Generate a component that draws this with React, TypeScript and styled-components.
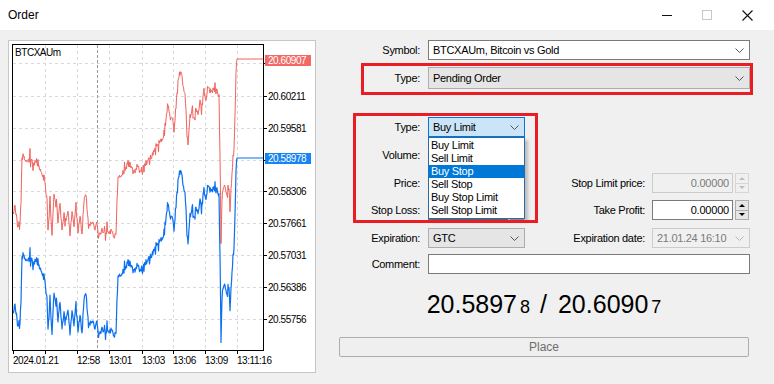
import React from 'react';
import styled, { createGlobalStyle, css } from 'styled-components';

const GlobalStyle = createGlobalStyle`
  html, body { margin: 0; padding: 0; background: #f0f0f0; }
  body { font-family: "Liberation Sans", Arial, sans-serif; font-size: 11px; color: #000; }
  * { box-sizing: border-box; }
`;

const Window = styled.div`
  width: 774px;
  height: 384px;
  background: #f0f0f0;
  overflow: hidden;
  display: flex;
  flex-direction: column;
`;

const TitleBar = styled.div`
  height: 30px;
  flex-shrink: 0;
  background: #fff;
  display: flex;
  align-items: center;
  padding-left: 8px;
  font-size: 12px;
`;

const Controls = styled.div`
  margin-left: auto;
  height: 100%;
  display: flex;
  padding-right: 7px;
`;

const CtrlButton = styled.div<{ $disabled?: boolean }>`
  width: 40px;
  height: 100%;
  display: flex;
  align-items: center;
  justify-content: center;
  color: ${(p) => (p.$disabled ? '#c8c8c8' : '#111')};
`;

const Body = styled.div`
  display: flex;
  padding: 10px 0 0 8px;
`;

const ChartPanel = styled.div`
  width: 308px;
  height: 333px;
  flex-shrink: 0;
  background: #fff;
  border: 1px solid #c6c6c6;
  svg { display: block; }
`;

const Form = styled.div`
  position: relative;
  margin-left: 14px;
  width: 444px;
`;

const Row = styled.div<{ $mt?: number; $h?: number }>`
  display: flex;
  align-items: center;
  height: ${(p) => p.$h ?? 20}px;
  margin-top: ${(p) => p.$mt ?? 0}px;
`;

const Label = styled.div<{ $w?: number; $pr?: number }>`
  width: ${(p) => p.$w ?? 98}px;
  flex-shrink: 0;
  padding-right: ${(p) => p.$pr ?? 8}px;
  text-align: right;
  white-space: nowrap;
  letter-spacing: -0.3px;
`;

type Tone = 'white' | 'gray' | 'focus' | 'disabled';

const tones: Record<Tone, ReturnType<typeof css>> = {
  white: css`background: #fff; border-color: #7a7a7a; color: #000;`,
  gray: css`background: #e5e5e5; border-color: #adadad; color: #000;`,
  focus: css`background: #cce4f7; border-color: #0078d7; color: #000;`,
  disabled: css`background: #f0f0f0; border-color: #cccccc; color: #7a7a7a;`,
};

const SelectBox = styled.div<{ $tone: Tone; $w: number; $h?: number }>`
  width: ${(p) => p.$w}px;
  height: ${(p) => p.$h ?? 20}px;
  flex-shrink: 0;
  display: flex;
  align-items: center;
  padding-left: 4px;
  border: 1px solid;
  letter-spacing: -0.3px;
  white-space: nowrap;
  ${(p) => tones[p.$tone]}
`;

const Chevron = styled.svg<{ $light?: boolean }>`
  margin-left: auto;
  margin-right: 5px;
  flex-shrink: 0;
  stroke: ${(p) => (p.$light ? '#b8b8b8' : '#555')};
`;

const Input = styled.div<{ $w: number; $disabled?: boolean; $left?: boolean }>`
  width: ${(p) => p.$w}px;
  height: 20px;
  flex-shrink: 0;
  display: flex;
  align-items: center;
  justify-content: ${(p) => (p.$left ? 'flex-start' : 'flex-end')};
  padding: 0 3px;
  border: 1px solid ${(p) => (p.$disabled ? '#cccccc' : '#7a7a7a')};
  background: ${(p) => (p.$disabled ? '#f0f0f0' : '#fff')};
  color: ${(p) => (p.$disabled ? '#7a7a7a' : '#000')};
  letter-spacing: -0.2px;
`;

const Spinner = styled.div<{ $disabled?: boolean }>`
  width: 14px;
  height: 20px;
  margin-left: 2px;
  flex-shrink: 0;
  display: flex;
  flex-direction: column;
  border: 1px solid ${(p) => (p.$disabled ? '#d6d6d6' : '#adadad')};
  background: ${(p) => (p.$disabled ? '#f0f0f0' : '#e5e5e5')};
`;

const SpinHalf = styled.div<{ $down?: boolean; $disabled?: boolean }>`
  flex: 1;
  display: flex;
  align-items: center;
  justify-content: center;
  ${(p) => !p.$down && css`border-bottom: 1px solid ${p.$disabled ? '#d6d6d6' : '#adadad'};`}
  &::after {
    content: '';
    border-left: 3px solid transparent;
    border-right: 3px solid transparent;
    ${(p) =>
      p.$down
        ? css`border-top: 3px solid ${p.$disabled ? '#bdbdbd' : '#000'};`
        : css`border-bottom: 3px solid ${p.$disabled ? '#bdbdbd' : '#000'};`}
  }
`;

const DropAnchor = styled.div`
  position: relative;
  z-index: 3;
`;

const DropList = styled.div`
  position: absolute;
  top: 100%;
  left: 0;
  width: 100%;
  padding: 1px 0;
  background: #fff;
  border: 1px solid #2b6aa6;
  box-shadow: 3px 3px 3px rgba(0, 0, 0, 0.22);
`;

const DropItem = styled.div<{ $active?: boolean }>`
  height: 13px;
  line-height: 13px;
  padding-left: 2px;
  letter-spacing: -0.3px;
  white-space: nowrap;
  background: ${(p) => (p.$active ? '#0078d7' : 'transparent')};
  color: ${(p) => (p.$active ? '#fff' : '#000')};
`;

const Highlight = styled.div<{ $x: number; $y: number; $w: number; $h: number }>`
  position: absolute;
  left: ${(p) => p.$x}px;
  top: ${(p) => p.$y}px;
  width: ${(p) => p.$w}px;
  height: ${(p) => p.$h}px;
  border: 3px solid #ec1c24;
  pointer-events: none;
  z-index: 4;
`;

const Quote = styled.div`
  margin: 16px 0 0 9px;
  width: 410px;
  height: 30px;
  line-height: 30px;
  font-size: 25px;
  text-align: center;
  white-space: nowrap;
  color: #000;
`;

const QuoteSmall = styled.span`
  font-size: 18px;
  margin-left: 3px;
`;

const QuoteSep = styled.span`
  margin: 0 11px 0 10px;
`;

const PlaceButton = styled.div`
  margin: 18px 0 0 9px;
  width: 410px;
  height: 20px;
  display: flex;
  align-items: center;
  justify-content: center;
  border: 1px solid #adadad;
  border-radius: 2px;
  background: #efefef;
  color: #6d6d6d;
  font-size: 12px;
`;

const ChevronIcon = ({ light }: { light?: boolean }) => (
  <Chevron $light={light} width="9" height="5" viewBox="0 0 9 5" fill="none" strokeWidth="1">
    <path d="M0.5 0.5 L4.5 4.5 L8.5 0.5" />
  </Chevron>
);

const Select = ({ tone, w, h, children }: { tone: Tone; w: number; h?: number; children: React.ReactNode }) => (
  <SelectBox $tone={tone} $w={w} $h={h}>
    <span>{children}</span>
    <ChevronIcon light={tone === 'disabled'} />
  </SelectBox>
);

const SpinButtons = ({ disabled }: { disabled?: boolean }) => (
  <Spinner $disabled={disabled}>
    <SpinHalf $disabled={disabled} />
    <SpinHalf $down $disabled={disabled} />
  </Spinner>
);

// ---- chart data (page coordinates, bid line; ask = bid - spread) ----
const BLUE_KEYS: [number, number][] = [
  [13, 310], [16, 312], [18, 328], [20, 316], [21, 300], [22, 256], [25, 258], [28, 262], [30, 255],
  [33, 263], [36, 260], [40, 268], [43, 275], [45, 283], [47, 300], [48, 330], [50, 300], [52, 333],
  [54, 290], [56, 305], [58, 320], [60, 300], [62, 330], [64, 310], [66, 322], [68, 310], [70, 333],
  [72, 312], [74, 325], [76, 305], [78, 330], [80, 315], [82, 333], [84, 300], [86, 295], [88, 318],
  [90, 325], [92, 320], [95, 330], [97, 322], [99, 334], [102, 330], [106, 331], [110, 330], [114, 334],
  [116, 335], [117, 300], [118, 278], [121, 273], [125, 270], [128, 262], [131, 265], [134, 272],
  [137, 266], [140, 270], [143, 268], [146, 262], [149, 258], [152, 255], [155, 247], [158, 243],
  [161, 238], [163, 240], [164, 228], [166, 222], [168, 198], [170, 218], [172, 215], [174, 232],
  [176, 206], [178, 180], [180, 172], [181, 168], [183, 185], [185, 190], [187, 230], [188, 243],
  [190, 215], [192, 210], [194, 220], [196, 207], [198, 212], [200, 200], [202, 205], [204, 190],
  [206, 198], [208, 188], [211, 190], [214, 188], [217, 191], [219, 200], [220, 255], [221, 335],
  [222, 300], [223, 290], [225, 285], [227, 297], [229, 283], [230, 310], [232, 270], [234, 250],
  [235, 215], [236, 170], [237, 158],
];

function buildSeries(): [number, number][] {
  let seed = 90211;
  const rnd = () => {
    seed = (seed * 16807) % 2147483647;
    return seed / 2147483647;
  };
  const pts: [number, number][] = [];
  for (let i = 0; i < BLUE_KEYS.length - 1; i++) {
    const [x0, y0] = BLUE_KEYS[i];
    const [x1, y1] = BLUE_KEYS[i + 1];
    const steps = Math.max(1, Math.round((x1 - x0) / 0.5));
    for (let k = 0; k < steps; k++) {
      const t = k / steps;
      let jitter = (rnd() - 0.5) * 6;
      if (rnd() < 0.15) jitter += (rnd() - 0.5) * 18;
      pts.push([x0 + (x1 - x0) * t, y0 + (y1 - y0) * t + jitter]);
    }
  }
  pts.push([237, 158], [263, 158]);
  return pts;
}

const BID = buildSeries();
const ASK = BID.map(([x, y]) => [x, y - 99] as [number, number]);
const toPath = (pts: [number, number][]) =>
  pts.map(([x, y], i) => `${i ? 'L' : 'M'}${x.toFixed(1)} ${y.toFixed(1)}`).join(' ');

const H_GRID = [63, 96, 128, 160, 191, 223, 255, 287, 319];
const V_GRID = [45, 77, 109, 142, 173, 205, 237];
const PRICES: [string, number][] = [
  ['20.60211', 96], ['20.59581', 128], ['20.58306', 191], ['20.57661', 223],
  ['20.57031', 255], ['20.56386', 287], ['20.55756', 319],
];
const TIMES: [string, number][] = [
  ['2024.01.21', 13], ['12:58', 77], ['13:01', 109], ['13:03', 142], ['13:06', 173], ['13:09', 205], ['13:11:16', 237],
];

const Chart = () => (
  <svg width="306" height="331" viewBox="9 41 306 331">
    <g shapeRendering="crispEdges">
      {H_GRID.map((y) => (
        <line key={'h' + y} x1="13" x2="263" y1={y + 0.5} y2={y + 0.5} stroke="#d9d9d9" strokeDasharray="3 3" />
      ))}
      {V_GRID.map((x) => (
        <line key={'v' + x} x1={x + 0.5} x2={x + 0.5} y1="45" y2="350" stroke="#d9d9d9" strokeDasharray="3 3" />
      ))}
      <line x1="97.5" x2="97.5" y1="45" y2="350" stroke="#9a9a9a" strokeDasharray="3 2" />
      {H_GRID.map((y) => (
        <line key={'t' + y} x1="263" x2="267" y1={y + 0.5} y2={y + 0.5} stroke="#000" />
      ))}
      {[13, ...V_GRID].map((x) => (
        <line key={'b' + x} x1={x + 0.5} x2={x + 0.5} y1="350" y2="354" stroke="#000" />
      ))}
    </g>
    <path d={toPath(ASK)} fill="none" stroke="#f0625c" strokeWidth="1" strokeLinejoin="round" />
    <path d={toPath(BID)} fill="none" stroke="#0a6ff0" strokeWidth="1.2" strokeLinejoin="round" />
    <rect x="12.5" y="44.5" width="251" height="306" fill="none" stroke="#000" shapeRendering="crispEdges" />
    <g fontFamily="Liberation Sans, Arial, sans-serif" fontSize="10" letterSpacing="-0.45">
      <text x="15" y="56" fill="#000">BTCXAUm</text>
      {PRICES.map(([t, y]) => (
        <text key={t} x="268" y={y + 4} fill="#000">{t}</text>
      ))}
      {TIMES.map(([t, x]) => (
        <text key={t} x={x} y="364" fill="#000">{t}</text>
      ))}
      <rect x="265" y="55" width="46" height="11" fill="#f26a66" />
      <text x="268" y="64" fill="#fff">20.60907</text>
      <rect x="265" y="153" width="46" height="11" fill="#1784f2" />
      <text x="268" y="162" fill="#fff">20.58978</text>
    </g>
  </svg>
);

const ORDER_TYPES = ['Buy Limit', 'Sell Limit', 'Buy Stop', 'Sell Stop', 'Buy Stop Limit', 'Sell Stop Limit'];

export default function App() {
  return (
    <Window>
      <GlobalStyle />
      <TitleBar>
        <span>Order</span>
        <Controls>
          <CtrlButton>
            <svg width="10" height="10" viewBox="0 0 10 10">
              <line x1="0" x2="10" y1="5.5" y2="5.5" stroke="currentColor" />
            </svg>
          </CtrlButton>
          <CtrlButton $disabled>
            <svg width="10" height="10" viewBox="0 0 10 10">
              <rect x="0.5" y="0.5" width="9" height="9" fill="none" stroke="currentColor" />
            </svg>
          </CtrlButton>
          <CtrlButton>
            <svg width="11" height="11" viewBox="0 0 11 11">
              <path d="M0.5 0.5 L10.5 10.5 M10.5 0.5 L0.5 10.5" stroke="currentColor" strokeWidth="1.1" />
            </svg>
          </CtrlButton>
        </Controls>
      </TitleBar>

      <Body>
        <ChartPanel>
          <Chart />
        </ChartPanel>

        <Form>
          <Row>
            <Label>Symbol:</Label>
            <Select tone="white" w={322}>BTCXAUm, Bitcoin vs Gold</Select>
          </Row>
          <Row $mt={7} $h={22}>
            <Label>Type:</Label>
            <Select tone="gray" w={322} h={22}>Pending Order</Select>
          </Row>

          <Row $mt={28}>
            <Label>Type:</Label>
            <DropAnchor>
              <Select tone="focus" w={97}>Buy Limit</Select>
              <DropList>
                {ORDER_TYPES.map((t) => (
                  <DropItem key={t} $active={t === 'Buy Stop'}>{t}</DropItem>
                ))}
              </DropList>
            </DropAnchor>
          </Row>
          <Row $mt={8}>
            <Label>Volume:</Label>
            <Input $w={80} />
            <SpinButtons />
          </Row>
          <Row $mt={8}>
            <Label>Price:</Label>
            <Input $w={80} />
            <SpinButtons />
            <Label $w={128} $pr={7}>Stop Limit price:</Label>
            <Input $w={81} $disabled>0.00000</Input>
            <SpinButtons disabled />
          </Row>
          <Row $mt={7}>
            <Label>Stop Loss:</Label>
            <Input $w={80} />
            <SpinButtons />
            <Label $w={128} $pr={7}>Take Profit:</Label>
            <Input $w={81}>0.00000</Input>
            <SpinButtons />
          </Row>
          <Row $mt={8}>
            <Label>Expiration:</Label>
            <Select tone="gray" w={97}>GTC</Select>
            <Label $w={127} $pr={7}>Expiration date:</Label>
            <Select tone="disabled" w={98}>21.01.24 16:10</Select>
          </Row>
          <Row $mt={6} $h={19}>
            <Label>Comment:</Label>
            <Input $w={322} $left />
          </Row>

          <Quote>
            20.5897<QuoteSmall>8</QuoteSmall>
            <QuoteSep>/</QuoteSep>
            20.6090<QuoteSmall>7</QuoteSmall>
          </Quote>
          <PlaceButton>Place</PlaceButton>

          <Highlight $x={31} $y={23} $w={392} $h={32} />
          <Highlight $x={23} $y={73} $w={185} $h={110} />
        </Form>
      </Body>
    </Window>
  );
}
